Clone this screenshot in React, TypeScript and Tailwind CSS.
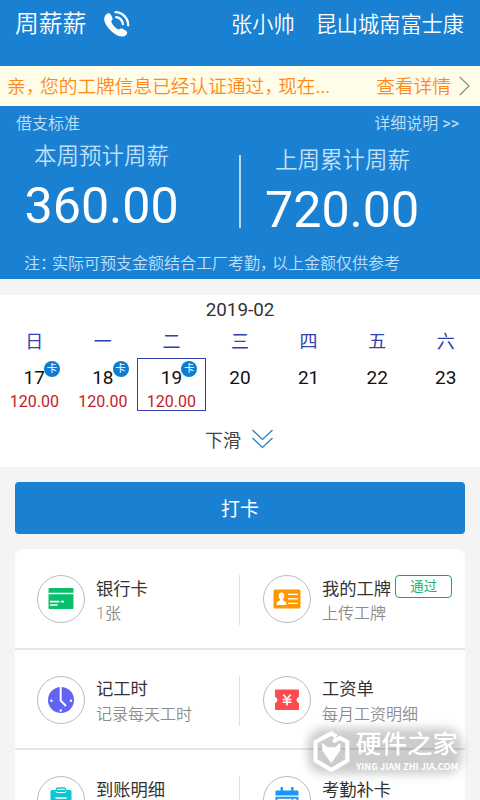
import type { ReactNode } from "react";

const weekdays = ["日", "一", "二", "三", "四", "五", "六"];

const days = [
  { date: 17, amount: "120.00" },
  { date: 18, amount: "120.00" },
  { date: 19, amount: "120.00", selected: true },
  { date: 20 },
  { date: 21 },
  { date: 22 },
  { date: 23 },
];

function PhoneIcon() {
  return (
    <svg className="w-[28px] h-[28px]" viewBox="0 0 28 28" fill="none">
      <path
        d="M3.4 4.2C4.8 2.7 6.8 2.8 7.8 4.6L9.3 7.6C10 9 9.5 10 8.3 11C8.5 14 12.5 18.3 15.8 19.6C16.9 18.5 18.2 18.1 19.5 18.8L23 20.8C24.6 21.8 24.6 23.6 23.1 25C20.5 27.3 16.4 27 11.8 24C7 20.8 3.2 16.3 1.6 11.8C.7 8.9 1.2 6.2 3.4 4.2Z"
        fill="#fff"
      />
      <path d="M13.2 7.1C16.7 7.6 19.4 10.5 19.9 14.2" stroke="#fff" strokeWidth="2.3" strokeLinecap="round" />
      <path d="M12.5 2.2C19.5 2.4 25.2 8.2 25.2 15.4" stroke="#fff" strokeWidth="2.3" strokeLinecap="round" />
    </svg>
  );
}

function CardIcon() {
  return (
    <svg className="w-[26px] h-[22px]" viewBox="0 0 26 22">
      <path d="M1.5 0H24.5Q25.5 0 25.5 1V4.8H.5V1Q.5 0 1.5 0ZM.5 6.3H25.5V20Q25.5 21 24.5 21H1.5Q.5 21 .5 20Z" fill="#0abf6b" />
      <path d="M2 13.7H11.5M13 13.7H16M2 17H9.7" stroke="#fff" strokeWidth="1.7" />
    </svg>
  );
}

function BadgeIcon() {
  return (
    <svg className="w-[28px] h-[20px]" viewBox="0 0 28 20">
      <rect x=".5" y=".5" width="27" height="19" rx="1.5" fill="#ff9800" />
      <path
        d="M8.5 3.5C10.4 3.5 11.4 4.9 11.4 6.8C11.4 8.4 10.8 9.6 9.9 10.3V11.3L12.5 12.7Q13.4 13.2 13.4 14.7V16H3.6V14.7Q3.6 13.2 4.5 12.7L7.1 11.3V10.3C6.2 9.6 5.6 8.4 5.6 6.8C5.6 4.9 6.6 3.5 8.5 3.5Z"
        fill="#fff"
      />
      <path d="M15 5.3H25M15 9.8H25M15 14.3H25" stroke="#fff" strokeWidth="1.3" />
    </svg>
  );
}

function ClockIcon() {
  return (
    <svg className="w-[26px] h-[26px]" viewBox="0 0 26 26">
      <circle cx="13" cy="13" r="13" fill="#6163f5" />
      <path d="M12.7 0V13.7L18 19" fill="none" stroke="#fff" strokeWidth="2" />
      <circle cx="3.4" cy="13.7" r="1.2" fill="#fff" />
      <circle cx="23" cy="13.7" r="1.2" fill="#fff" />
      <circle cx="12.8" cy="23.5" r="1.2" fill="#fff" />
    </svg>
  );
}

function TicketIcon() {
  return (
    <svg className="w-[26px] h-[22px]" viewBox="0 0 26 22">
      <path
        d="M2 .5H24Q25 .5 25 1.5V8C21.8 9.2 21.8 12.8 25 14V20Q25 21 24 21H2Q1 21 1 20V14C4.2 12.8 4.2 9.2 1 8V1.5Q1 .5 2 .5Z"
        fill="#ff4b50"
      />
      <path d="M9.3 5.5L13 10L16.7 5.5M13 10V16.5M8.6 10.5H17.4M8.6 13.3H17.4" fill="none" stroke="#fff" strokeWidth="1.6" />
    </svg>
  );
}

function ClipboardIcon() {
  return (
    <svg className="w-[22px] h-[26px]" viewBox="0 0 22 26">
      <path d="M2 3H20Q21.5 3 21.5 4.5V24Q21.5 25.5 20 25.5H2Q.5 25.5 .5 24V4.5Q.5 3 2 3Z" fill="#08cad0" />
      <path d="M6.5 4V2.5Q6.5 1 8 1H14Q15.5 1 15.5 2.5V4" fill="none" stroke="#08cad0" strokeWidth="1.5" />
      <path d="M6 4.2Q6 5.5 7.2 5.5H14.8Q16 5.5 16 4.2" fill="none" stroke="#fff" strokeWidth="1" />
      <path d="M5.5 11H16.5M5.5 16H16.5" stroke="#fff" strokeWidth="1.5" />
    </svg>
  );
}

function CalendarIcon() {
  return (
    <svg className="w-[24px] h-[26px]" viewBox="0 0 24 26">
      <path d="M1.5 3.5H22.5Q23.5 3.5 23.5 4.5V8.5H.5V4.5Q.5 3.5 1.5 3.5Z" fill="#1796fb" />
      <path d="M6.8 0V6M17.3 0V6" stroke="#1796fb" strokeWidth="2.4" />
      <path d="M1.5 10.7H22.5V24.5H1.5Z" fill="none" stroke="#1796fb" strokeWidth="2" />
      <path d="M7 17L11 20.5L18 12.5" fill="none" stroke="#1796fb" strokeWidth="2" />
    </svg>
  );
}

type MenuItem = {
  title: string;
  sub?: string;
  icon: ReactNode;
  tag?: string;
};

const menu: MenuItem[] = [
  { title: "银行卡", sub: "1张", icon: <CardIcon /> },
  { title: "我的工牌", sub: "上传工牌", icon: <BadgeIcon />, tag: "通过" },
  { title: "记工时", sub: "记录每天工时", icon: <ClockIcon /> },
  { title: "工资单", sub: "每月工资明细", icon: <TicketIcon /> },
  { title: "到账明细", icon: <ClipboardIcon /> },
  { title: "考勤补卡", icon: <CalendarIcon /> },
];

function MenuCell({ item, right }: { item: MenuItem; right: boolean }) {
  return (
    <div className={right ? "flex flex-1 pl-[23px]" : "flex flex-1 pl-[22px]"}>
      <div className="flex h-12 w-12 shrink-0 items-center justify-center rounded-full border border-[#bcbcbc]">
        {item.icon}
      </div>
      <div className="ml-[11px]">
        <div className="flex h-[26px] items-center">
          <span className="pt-px text-[17.3px] leading-[26px] text-[#333]">{item.title}</span>
          {item.tag && (
            <span className="-mt-[3px] ml-[4px] flex h-[23px] w-[57px] items-center justify-center rounded border-[1.5px] border-[#1da462] pt-px text-[13.3px] text-[#12b56a]">
              {item.tag}
            </span>
          )}
        </div>
        {item.sub && <p className="pt-px text-base leading-[24px] font-[350] text-[#8c8c8c]">{item.sub}</p>}
      </div>
    </div>
  );
}

function Watermark() {
  return (
    <div className="absolute top-[728px] left-[312px] flex gap-[5px] text-white">
      <div className="absolute -inset-x-[4px] inset-y-0 rounded-[16px] bg-black/20 blur-[5px]" />
      <svg className="relative h-[46px] w-[39px]" viewBox="0 0 39 46">
        {/* hexagon frame with a slit at the top right */}
        <path d="M24.5 8.6L19.3 5.5L3.5 14V32.5L19.3 42L35.3 32.5V14L28 9.8L21 13.5" fill="none" stroke="#fff" strokeWidth="4.2" />
        <path d="M10.3 14.7L15.5 19.2H23.5L28.3 14.7L28.5 22L19.3 35.3L10 22Z" fill="#fff" />
      </svg>
      <div className="relative">
        <p className="pt-[2px] text-[25.5px] leading-[28px] font-medium whitespace-nowrap">硬件之家</p>
        <p className="pt-[2px] font-['Noto_Sans_CJK_SC',sans-serif] text-[9.2px] leading-[12px] font-bold whitespace-nowrap">
          YING JIAN ZHI JIA.COM
        </p>
      </div>
    </div>
  );
}

export default function App() {
  return (
    <div className="relative h-[800px] w-[480px] overflow-hidden bg-[#f4f4f4] font-[Roboto,'Noto_Sans_CJK_SC',sans-serif]">
      <header className="flex h-[66px] items-start justify-between bg-[#1a81d2] pr-4 pl-[15px] text-white">
        <div className="flex h-12 items-center gap-[17px]">
          <h1 className="pt-[2px] text-[23.8px] font-[350]">周薪薪</h1>
          <PhoneIcon />
        </div>
        <div className="flex h-[49px] items-center gap-[21px] text-[21.2px] font-[350]">
          <span>张小帅</span>
          <span>昆山城南富士康</span>
        </div>
      </header>

      {/* Notice bar */}
      <div className="flex h-10 items-center bg-[#fffce7] pr-[10px] pl-[7px] text-[18.7px] font-[350] text-[#ff8a1c]">
        <p className="flex-1 pt-[2px] whitespace-nowrap [font-feature-settings:'halt']">
          亲<span className="mr-[5px]">，</span>您的工牌信息已经认证通过<span className="mr-[4.5px]">，</span>现在
          <span className="font-normal">...</span>
        </p>
        <span className="pt-[2px]">查看详情</span>
        <svg className="ml-[8px] h-5 w-[11px]" viewBox="0 0 11 20" fill="none" stroke="#8a8a80" strokeWidth="1.2">
          <path d="M.8 1L10 10L.8 19" />
        </svg>
      </div>

      {/* Weekly pay summary */}
      <section className="h-[173px] bg-[#1a81d2] font-[350] text-[#c2e0f9]">
        <div className="flex h-[34px] items-center justify-between pt-[2px] pr-[21px] pl-4 text-base">
          <span>借支标准</span>
          <span>
            详细说明 <span className="font-normal">&gt;&gt;</span>
          </span>
        </div>
        <div className="flex h-[104px]">
          <div className="w-[239px]">
            <p className="pl-[34px] text-[22.5px] leading-[32px]">本周预计周薪</p>
            <p className="mt-[4px] pl-[24.5px] text-[50.2px] leading-[60px] font-normal text-white">360.00</p>
          </div>
          <div className="mt-[15px] h-[73px] w-[2px] bg-[#b9d9f3]" />
          <div className="flex-1">
            <p className="mt-[4px] pl-[34px] text-[22.5px] leading-[32px]">上周累计周薪</p>
            <p className="mt-[4px] pl-[24px] text-[50.2px] leading-[60px] font-normal text-white">720.00</p>
          </div>
        </div>
        <p className="mt-[8px] pl-6 text-base leading-6 whitespace-nowrap [font-feature-settings:'halt']">
          注<span className="mr-1">：</span>实际可预支金额结合工厂考勤<span className="mr-1">，</span>以上金额仅供参考
        </p>
      </section>

      {/* Week calendar */}
      <section className="mt-4 h-[172px] bg-white">
        <p className="pt-[2px] text-center text-[18.8px] leading-[26px] text-[#333]">2019-02</p>
        <div className="mt-[5px] grid grid-cols-7 text-center text-[18px] leading-[28px] text-[#3040ae]">
          {weekdays.map((day) => (
            <span key={day}>{day}</span>
          ))}
        </div>
        <div className="mt-[2px] grid grid-cols-7 text-center">
          {days.map((day) => (
            <div
              key={day.date}
              className={day.selected ? "relative h-[53px] border border-[#2f3fae]" : "relative h-[53px] border border-transparent"}
            >
              <p className="pt-[7px] text-[19px] leading-6 text-[#111]">{day.date}</p>
              {day.amount && (
                <>
                  <p className="pt-px text-base leading-[22px] text-[#c41a22]">{day.amount}</p>
                  <span className="absolute top-[2px] left-[43px] flex h-4 w-4 items-center justify-center rounded-full bg-[#0d7dd2] text-[10.5px] leading-none text-white">
                    卡
                  </span>
                </>
              )}
            </div>
          ))}
        </div>
        <div className="mt-[15px] flex items-center justify-center gap-[11px] pr-[2px] text-[18px] leading-[28px] text-[#444]">
          <span className="pt-px">下滑</span>
          <svg className="-mt-[3px] h-[20px] w-[21px]" viewBox="0 0 21 20" fill="none" stroke="#1a81d2" strokeWidth="1.2">
            <path d="M.5 1L10.5 10.5L20.5 1M.5 9L10.5 18.5L20.5 9" />
          </svg>
        </div>
      </section>

      <button className="mx-[15px] mt-[15px] flex h-[52px] w-[450px] items-center justify-center rounded bg-[#1a81d2] pt-[4px] text-[19px] text-white">
        打卡
      </button>

      <section className="mx-[15px] mt-[15px] grid grid-cols-2 rounded-lg bg-white">
        {menu.map((item, i) => (
          <div key={item.title} className="flex h-[100.5px] items-start border-b-2 border-[#e6e6e6] pt-[26px]">
            <MenuCell item={item} right={i % 2 === 1} />
            {i % 2 === 0 && <span className="h-[50px] w-[1.5px] bg-[#dedede]" />}
          </div>
        ))}
      </section>

      <Watermark />
    </div>
  );
}
